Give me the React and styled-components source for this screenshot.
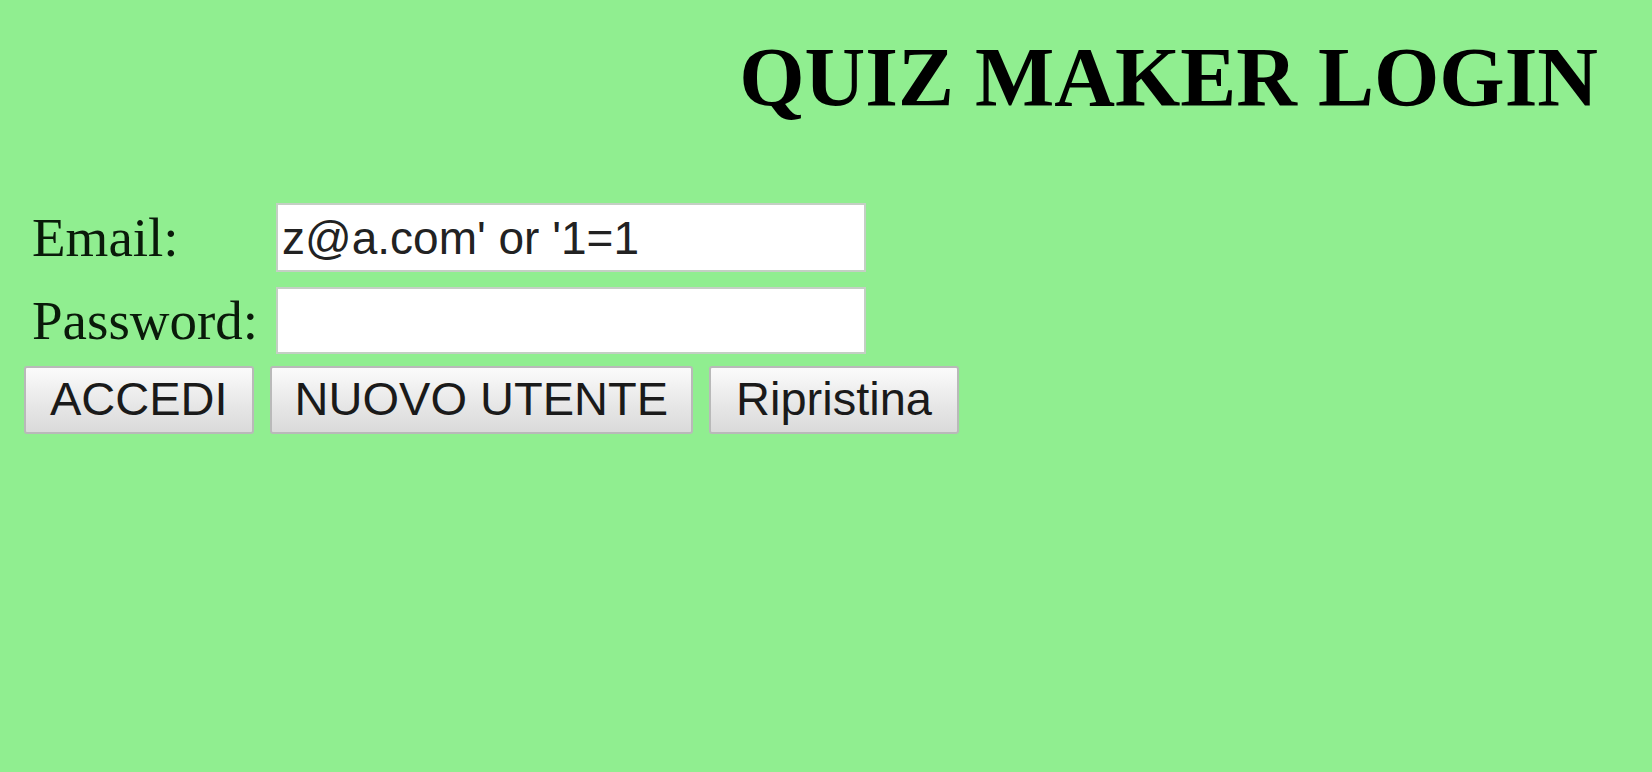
import React from "react";
import styled, { createGlobalStyle } from "styled-components";

const Global = createGlobalStyle`
  html, body { margin: 0; padding: 0; background: #90ee90; }
  body { font-family: "Liberation Serif", "Times New Roman", serif; color: #000; }
`;

const Page = styled.div`
  min-height: 772px;
  background: #90ee90;
  display: flex;
  flex-direction: column;
`;

const Title = styled.h1`
  margin: 36px 54px 0 0;
  font-family: "Liberation Serif", "Times New Roman", serif;
  font-weight: bold;
  font-size: 84px;
  line-height: 1;
  text-align: right;
`;

const Form = styled.form`
  margin-top: 83px;
  padding-left: 24px;
  display: flex;
  flex-direction: column;
  gap: 12px;
`;

const Fields = styled.div`
  display: grid;
  grid-template-columns: 252px 590px;
  row-gap: 15px;
  align-items: center;
`;

const Label = styled.label`
  padding-left: 8px;
  font-family: "Liberation Serif", "Times New Roman", serif;
  font-size: 55px;
  line-height: 1;
  color: #0a1a0a;
`;

const Input = styled.input`
  box-sizing: border-box;
  width: 590px;
  height: ${(p) => p.$h}px;
  margin: 0;
  padding: 0 4px;
  border: 2px solid #c4cfc4;
  background: #fff;
  font-family: "Liberation Sans", Arial, sans-serif;
  font-size: 46px;
  color: #222;
  outline: none;
`;

const Buttons = styled.div`
  display: flex;
  gap: 16px;
`;

const Button = styled.button`
  box-sizing: border-box;
  height: 68px;
  margin: 0;
  padding: 0 ${(p) => p.$pad}px 4px;
  border: 2px solid #b9b9b9;
  border-radius: 3px;
  background: linear-gradient(#fbfbfb, #e6e6e6 60%, #dadada);
  font-family: "Liberation Sans", Arial, sans-serif;
  font-size: 47px;
  color: #1a1a1a;
  cursor: pointer;
`;

export default function App() {
  return (
    <Page>
      <Global />
      <Title>QUIZ MAKER LOGIN</Title>
      <Form onSubmit={(e) => e.preventDefault()}>
        <Fields>
          <Label htmlFor="email">Email:</Label>
          <Input id="email" type="text" $h={69} defaultValue="z@a.com' or '1=1" />
          <Label htmlFor="pwd">Password:</Label>
          <Input id="pwd" type="password" $h={67} />
        </Fields>
        <Buttons>
          <Button type="submit" $pad={24}>ACCEDI</Button>
          <Button type="button" $pad={23}>NUOVO UTENTE</Button>
          <Button type="reset" $pad={25}>Ripristina</Button>
        </Buttons>
      </Form>
    </Page>
  );
}
